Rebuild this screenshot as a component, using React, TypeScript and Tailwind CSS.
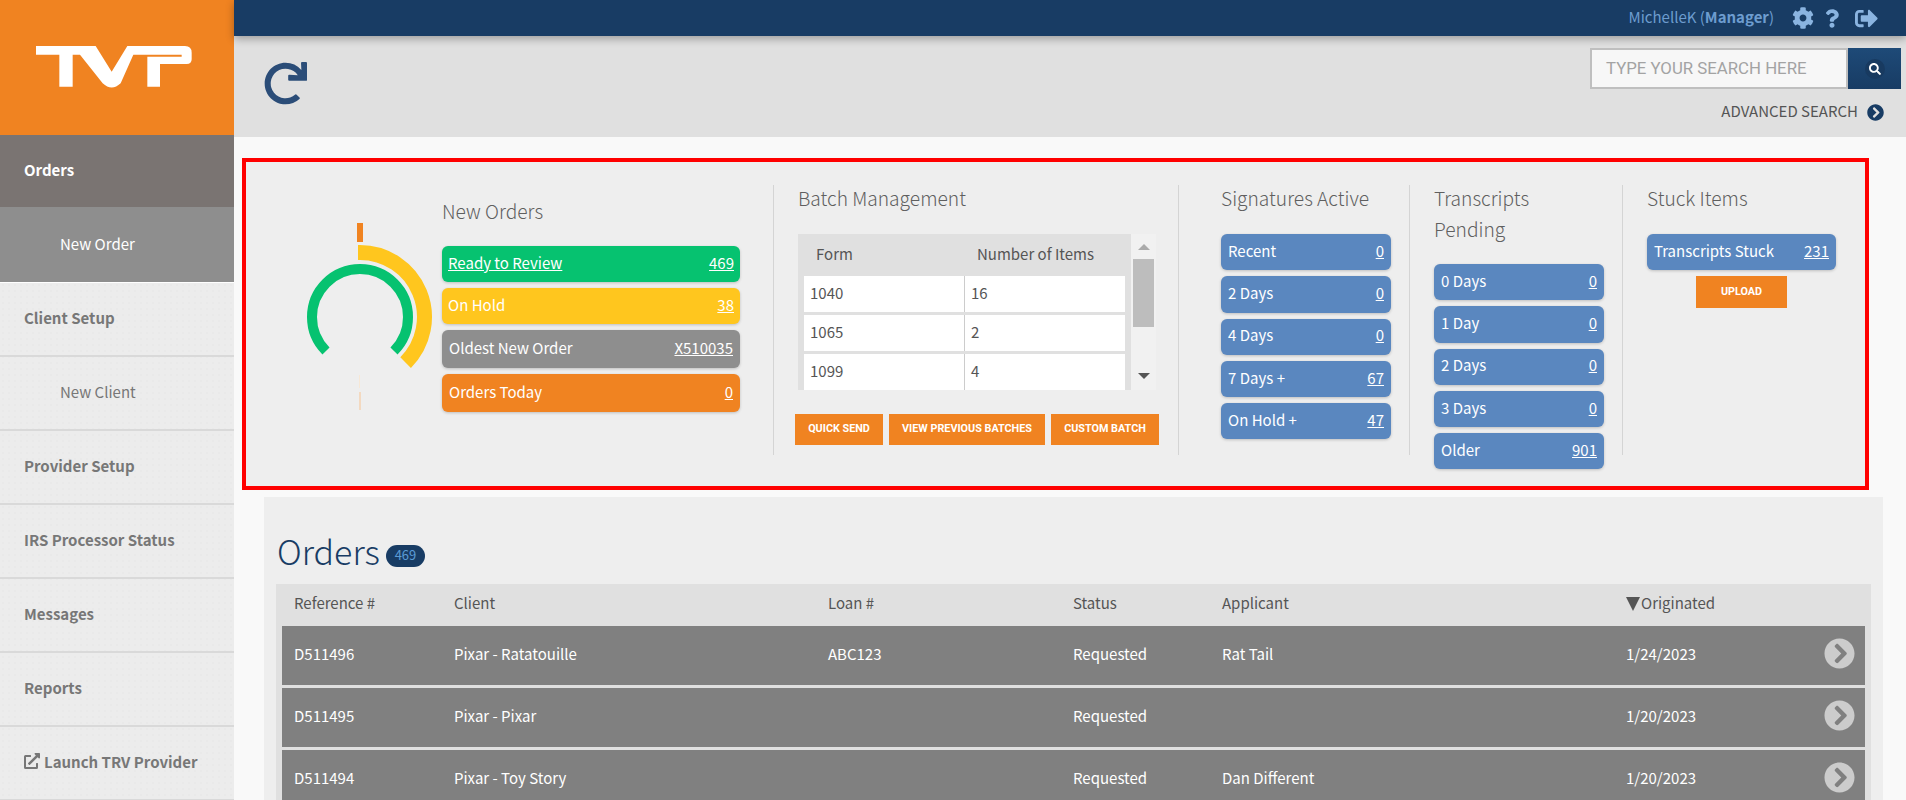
import React from "react";
import { FaCog, FaQuestion, FaSignOutAlt, FaRedo, FaSearch, FaChevronCircleRight, FaExternalLinkAlt } from "react-icons/fa";

const Pill = ({ label, value, cls }: { label: string; value: string; cls: string }) => (
  <div className={`flex items-center justify-between rounded-[6px] pb-[2px] text-white text-[15px] shadow-[0_1px_3px_rgba(0,0,0,0.2)] ${cls}`}>
    <span>{label}</span>
    <span className="underline">{value}</span>
  </div>
);

const Blue = ({ items }: { items: [string, string][] }) => (
  <div className="flex flex-col gap-[6px] w-[170px]">
    {items.map(([l, v]) => (
      <Pill key={l} label={l} value={v} cls="h-[36.3px] px-[7px] bg-[#5a87bf]" />
    ))}
  </div>
);

const Title = ({ children }: { children: React.ReactNode }) => (
  <h2 className="text-[19.2px] leading-[31px] -mt-[2px] font-light text-[#5f5f5f]">{children}</h2>
);

const Btn = ({ children, cls }: { children: React.ReactNode; cls: string }) => (
  <button className={`bg-[#f08321] text-white text-[10.8px] font-bold uppercase font-['Roboto',sans-serif] flex items-center justify-center ${cls}`}>{children}</button>
);

const SideItem = ({ children, sub }: { children: React.ReactNode; sub?: boolean }) => (
  <div className={`h-[74px] shrink-0 flex items-center pb-[1px] border-b-2 border-[#d9d9d9] text-[#777] text-[15px] ${sub ? "pl-[60px] font-normal" : "pl-[24px] font-bold"}`}>
    {children}
  </div>
);

const orders = [
  ["D511496", "Pixar - Ratatouille", "ABC123", "Requested", "Rat Tail", "1/24/2023"],
  ["D511495", "Pixar - Pixar", "", "Requested", "", "1/20/2023"],
  ["D511494", "Pixar - Toy Story", "", "Requested", "Dan Different", "1/20/2023"],
];

const gridCols = "grid grid-cols-[160px_374px_245px_149px_404px_1fr] pl-[12px] pb-[3px]";

export default function App() {
  return (
    <div className="flex h-[800px] w-[1906px] overflow-hidden bg-[#f9f9f9] font-['Noto_Sans_CJK_SC','Lato',sans-serif]">
      <aside className="w-[234px] shrink-0 flex flex-col bg-[#ececec] bg-[radial-gradient(#e9e9e9_1px,transparent_1px)] bg-[length:6px_6px]">
        <div className="h-[135px] shrink-0 bg-[#f08321] pl-[30px] pt-[40px]">
          <svg width="170" height="55" viewBox="0 0 510 165" fill="#fff">
            <path d="M18 18H197L245 95L292 18H465Q485 18 485 38V58Q485 72 470 72H390V140H352V50H455V44H310L272 130Q245 155 218 130L150 44H128V140H88V44H18Z" />
          </svg>
        </div>
        <div className="h-[72px] shrink-0 bg-[#7a7472] flex items-center pb-[2px] pl-[24px] text-white font-bold text-[15px]">Orders</div>
        <div className="h-[75px] shrink-0 bg-[#8e8e8e] flex items-center pb-[1px] pl-[60px] text-white text-[15px]">New Order</div>
        <div className="h-[1px] shrink-0 bg-white" />
        <SideItem>Client Setup</SideItem>
        <SideItem sub>New Client</SideItem>
        <SideItem>Provider Setup</SideItem>
        <SideItem>IRS Processor Status</SideItem>
        <SideItem>Messages</SideItem>
        <SideItem>Reports</SideItem>
        <SideItem>
          <FaExternalLinkAlt className="w-[16px] h-[16px] mr-[4px] mb-[3px]" />
          Launch TRV Provider
        </SideItem>
      </aside>

      <main className="flex-1 min-w-0 flex flex-col">
        <div className="relative z-10 h-[36px] shrink-0 bg-[#183c64] shadow-[0_3px_8px_rgba(0,0,0,0.3)] flex items-center justify-end pr-[28px]">
          <span className="text-[15px] text-[#6d9ccf] mr-[18px] pb-[2px]">MichelleK (<b>Manager</b>)</span>
          <FaCog className="text-[#8ab4e0] w-[22px] h-[22px] mr-[11px]" />
          <FaQuestion className="text-[#8ab4e0] w-[14px] h-[19px] mr-[16px]" />
          <FaSignOutAlt className="text-[#8ab4e0] w-[23px] h-[23px]" />
        </div>

        <div className="h-[101px] shrink-0 bg-[#e0e0e0] flex justify-between pl-[30px] pr-[5px]">
          <FaRedo className="text-[#2b4d78] w-[43px] h-[43px] mt-[26px]" />
          <div className="flex flex-col items-end">
            <div className="flex mt-[12px] h-[41px]">
              <div className="w-[258px] border-2 border-[#bfbfbf] bg-[#f7f7f7] pl-[14px] flex items-center text-[16.8px] text-[#a3a3a3] font-['Roboto',sans-serif]">TYPE YOUR SEARCH HERE</div>
              <div className="w-[53px] bg-gradient-to-b from-[#1e4a78] to-[#183c64] flex items-center justify-center">
                <div className="w-[20px] h-[20px] rounded-full bg-[#183a60] flex items-center justify-center">
                  <FaSearch className="text-white w-[12px] h-[12px]" />
                </div>
              </div>
            </div>
            <div className="flex items-center mt-[11px] mr-[17px] text-[15px] text-[#555]">
              <span className="pb-[2px]">ADVANCED SEARCH</span>
              <FaChevronCircleRight className="text-[#183c64] w-[17px] h-[17px] ml-[9px]" />
            </div>
          </div>
        </div>

        <div className="flex-1 min-h-0 overflow-hidden">
          <section className="mt-[21px] ml-[8px] mr-[37px] h-[332px] border-4 border-[#ff0000] bg-[#eeeeee] pt-[23px] flex items-start">
            {/* New Orders */}
            <div className="w-[527px] h-[270px] flex">
              <svg width="196" height="230" viewBox="0 0 196 230" className="shrink-0">
                <rect x="111" y="38" width="6" height="19" fill="#f08321" />
                <path d="M112 67.5H114A64.5 64.5 0 0 1 159.6 177.6" fill="none" stroke="#ffc61e" strokeWidth="15" />
                <path d="M80 166A48 48 0 1 1 148 166" fill="none" stroke="#06c270" strokeWidth="10" />
                <rect x="113" y="190" width="1" height="13" fill="#f7e8d6" />
                <rect x="113" y="207" width="2" height="18" fill="#f3d9c0" />
              </svg>
              <div className="w-[298px] pt-[14px]">
                <h2 className="text-[19.2px] leading-[26px] -mt-[1px] mb-[22px] font-light text-[#5f5f5f]">New Orders</h2>
                <div className="flex flex-col gap-[6px]">
                  <div className="h-[36px] px-[6px] pb-[2px] rounded-[6px] bg-[#06c270] text-white text-[15px] flex items-center justify-between shadow-[0_1px_3px_rgba(0,0,0,0.2)]">
                    <span className="underline">Ready to Review</span>
                    <span className="underline">469</span>
                  </div>
                  <Pill label="On Hold" value="38" cls="h-[36px] px-[6px] bg-[#ffc61e]" />
                  <Pill label="Oldest New Order" value="X510035" cls="h-[38px] px-[7px] bg-[#8e8e8e]" />
                  <Pill label="Orders Today" value="0" cls="h-[38px] px-[7px] bg-[#f08321]" />
                </div>
              </div>
            </div>

            {/* Batch */}
            <div className="w-[406px] h-[270px] border-l border-r border-[#d4d4d4] pl-[24px] shrink-0">
              <Title>Batch Management</Title>
              <div className="mt-[20px] flex w-[358px] h-[156px]">
                <div className="w-[333px] h-[156px] bg-[#e0e0e0] px-[6px] overflow-hidden text-[15px] text-[#555]">
                  <div className="h-[42px] flex items-center pb-[2px]">
                    <span className="w-[173px] pl-[12px]">Form</span>
                    <span>Number of Items</span>
                  </div>
                  {[["1040", "16"], ["1065", "2"], ["1099", "4"]].map(([a, b]) => (
                    <div key={a} className="h-[36px] mb-[3px] flex bg-white">
                      <div className="w-[161px] pl-[6px] pb-[2px] flex items-center border-r border-[#cccccc]">{a}</div>
                      <div className="flex-1 pl-[6px] pb-[2px] flex items-center">{b}</div>
                    </div>
                  ))}
                </div>
                <div className="w-[25px] bg-[#f1f1f1] flex flex-col items-center px-[2px]">
                  <div className="mt-[10px] w-0 h-0 border-l-[6px] border-r-[6px] border-b-[6px] border-l-transparent border-r-transparent border-b-[#aaaaaa]" />
                  <div className="mt-[9px] w-full h-[68px] bg-[#bdbdbd]" />
                  <div className="mt-[46px] w-0 h-0 border-l-[6px] border-r-[6px] border-t-[6px] border-l-transparent border-r-transparent border-t-[#555555]" />
                </div>
              </div>
              <div className="flex gap-[6px] mt-[24px] -ml-[3px]">
                <Btn cls="w-[88px] h-[31px]">Quick Send</Btn>
                <Btn cls="w-[156px] h-[31px]">View Previous Batches</Btn>
                <Btn cls="w-[108px] h-[31px]">Custom Batch</Btn>
              </div>
            </div>

            {/* Signatures */}
            <div className="w-[231px] h-[270px] shrink-0 border-r border-[#d4d4d4] pl-[42px]">
              <Title>Signatures Active</Title>
              <div className="mt-[20px]">
                <Blue items={[["Recent", "0"], ["2 Days", "0"], ["4 Days", "0"], ["7 Days +", "67"], ["On Hold +", "47"]]} />
              </div>
            </div>

            {/* Transcripts */}
            <div className="w-[213px] h-[270px] shrink-0 border-r border-[#d4d4d4] pl-[24px]">
              <Title>Transcripts<br />Pending</Title>
              <div className="mt-[19px]">
                <Blue items={[["0 Days", "0"], ["1 Day", "0"], ["2 Days", "0"], ["3 Days", "0"], ["Older", "901"]]} />
              </div>
            </div>

            {/* Stuck */}
            <div className="flex-1 h-[270px] pl-[24px]">
              <Title>Stuck Items</Title>
              <div className="w-[189px] mt-[20px] flex flex-col items-center">
                <Pill label="Transcripts Stuck" value="231" cls="w-full h-[36px] px-[7px] bg-[#5a87bf]" />
                <Btn cls="w-[91px] h-[32px] mt-[6px]">Upload</Btn>
              </div>
            </div>
          </section>

          <section className="mt-[7px] ml-[30px] mr-[23px] bg-[#eeeeee] pt-[30px] px-[12px] h-[400px]">
            <div className="flex items-end pl-[1px] h-[57px] pb-[7px]">
              <h1 className="text-[34px] leading-[52px] font-light text-[#183c64]">Orders</h1>
              <span className="ml-[6px] mb-[10px] w-[39px] h-[22px] rounded-full bg-[#183c64] text-[#5a9bd5] text-[13px] pb-[2px] flex items-center justify-center">469</span>
            </div>
            <div className="bg-[#e0e0e0] px-[6px] pb-[3px]">
              <div className={`${gridCols} h-[42px] items-center text-[15px] text-[#555]`}>
                <span>Reference #</span><span>Client</span><span>Loan #</span><span>Status</span><span>Applicant</span>
                <span className="flex items-center"><span className="w-0 h-0 mr-[1px] border-l-[7px] border-r-[7px] border-t-[14px] border-l-transparent border-r-transparent border-t-[#555555]" />Originated</span>
              </div>
              {orders.map((r) => (
                <div key={r[0]} className={`${gridCols} relative h-[59px] mb-[3px] items-center bg-[#808080] text-white text-[15px]`}>
                  {r.map((c, i) => <span key={i}>{c}</span>)}
                  <FaChevronCircleRight className="absolute right-[10px] top-[12px] w-[31px] h-[31px] text-[#cccccc]" />
                </div>
              ))}
            </div>
          </section>
        </div>
      </main>
    </div>
  );
}
